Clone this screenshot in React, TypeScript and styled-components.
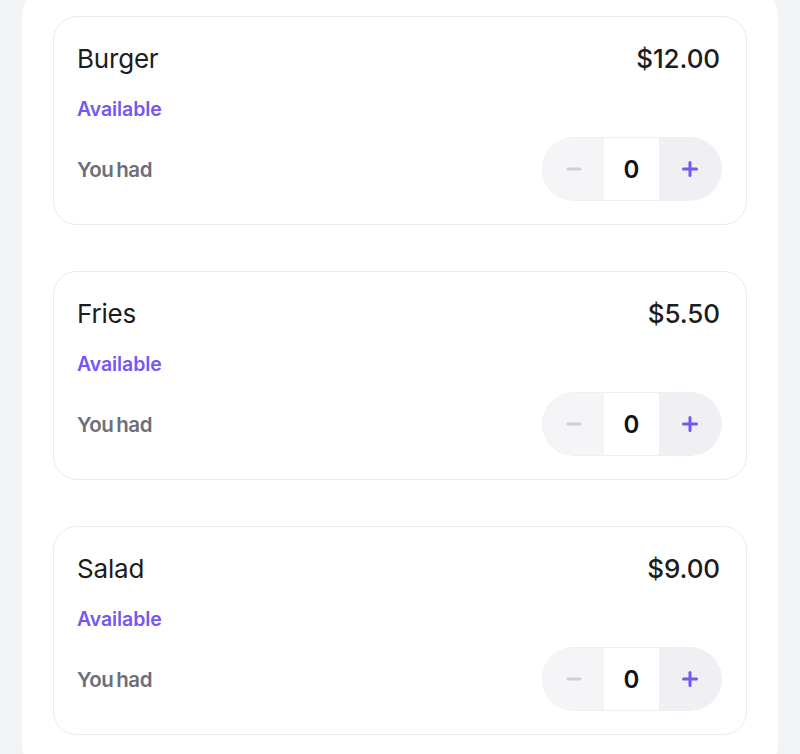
import React from 'react';
import styled, { createGlobalStyle } from 'styled-components';

const GlobalStyle = createGlobalStyle`
  html, body {
    margin: 0;
    padding: 0;
    background: #f2f3f5;
    font-family: Inter, "Noto Sans", sans-serif;
    overflow: hidden;
  }
`;

const Page = styled.div`
  display: flex;
  justify-content: center;
  padding: 0 22px;
`;

const Panel = styled.div`
  width: 756px;
  margin-top: -14px;
  background: #ffffff;
  border-radius: 30px;
  padding: 30px 31px 40px;
  box-sizing: border-box;
  display: flex;
  flex-direction: column;
  gap: 46px;
`;

const Card = styled.div`
  border: 1px solid #ebebef;
  border-radius: 24px;
  padding: 25px 26px 24px 23px;
  display: flex;
  flex-direction: column;
`;

const Row = styled.div`
  display: flex;
  align-items: center;
  justify-content: space-between;
`;

const Name = styled.div`
  font-size: 26px;
  line-height: 34px;
  font-weight: 400;
  color: #1c1c21;
  letter-spacing: -0.2px;
`;

const Price = styled.div`
  font-size: 26px;
  line-height: 34px;
  font-weight: 500;
  color: #1c1c21;
  letter-spacing: -0.1px;
`;

const Status = styled.div`
  margin-top: 21px;
  font-size: 19.5px;
  line-height: 24px;
  font-weight: 600;
  color: #7657f2;
  letter-spacing: -0.1px;
`;

const Footer = styled(Row)`
  margin-top: 17px;
`;

const Label = styled.div`
  font-size: 20.5px;
  font-weight: 600;
  color: #6e6e78;
  letter-spacing: -0.4px;
  word-spacing: -2px;
`;

const Stepper = styled.div`
  display: flex;
  height: 62px;
  border-radius: 31px;
  overflow: hidden;
  margin-right: -1px;
  box-shadow: 0 0 0 1px #efeff3;
`;

const StepButton = styled.button<{ $kind: 'minus' | 'plus' }>`
  width: ${p => (p.$kind === 'minus' ? 61 : 62)}px;
  border: none;
  padding: 0;
  margin: 0;
  display: flex;
  align-items: center;
  justify-content: center;
  background: ${p => (p.$kind === 'minus' ? '#f5f5f8' : '#efeff4')};
  cursor: pointer;
`;

const Count = styled.div`
  width: 55px;
  background: #ffffff;
  display: flex;
  align-items: center;
  justify-content: center;
  font-size: 24px;
  font-weight: 600;
  color: #111114;
`;

const MinusIcon = () => (
  <svg width="16" height="16" viewBox="0 0 16 16">
    <line x1="2" y1="8" x2="14" y2="8" stroke="#cfcfd6" strokeWidth="2.8" strokeLinecap="round" />
  </svg>
);

const PlusIcon = () => (
  <svg width="16" height="16" viewBox="0 0 16 16">
    <line x1="1.5" y1="8" x2="14.5" y2="8" stroke="#7657f2" strokeWidth="3" strokeLinecap="round" />
    <line x1="8" y1="1.5" x2="8" y2="14.5" stroke="#7657f2" strokeWidth="3" strokeLinecap="round" />
  </svg>
);

const items = [
  { name: 'Burger', price: '$12.00' },
  { name: 'Fries', price: '$5.50' },
  { name: 'Salad', price: '$9.00' },
];

const MenuCard = ({ name, price }: { name: string; price: string }) => (
  <Card>
    <Row>
      <Name>{name}</Name>
      <Price>{price}</Price>
    </Row>
    <Status>Available</Status>
    <Footer>
      <Label>You had</Label>
      <Stepper>
        <StepButton $kind="minus" aria-label="decrease"><MinusIcon /></StepButton>
        <Count>0</Count>
        <StepButton $kind="plus" aria-label="increase"><PlusIcon /></StepButton>
      </Stepper>
    </Footer>
  </Card>
);

export default function App() {
  return (
    <>
      <GlobalStyle />
      <Page>
        <Panel>
          {items.map(item => (
            <MenuCard key={item.name} name={item.name} price={item.price} />
          ))}
        </Panel>
      </Page>
    </>
  );
}
